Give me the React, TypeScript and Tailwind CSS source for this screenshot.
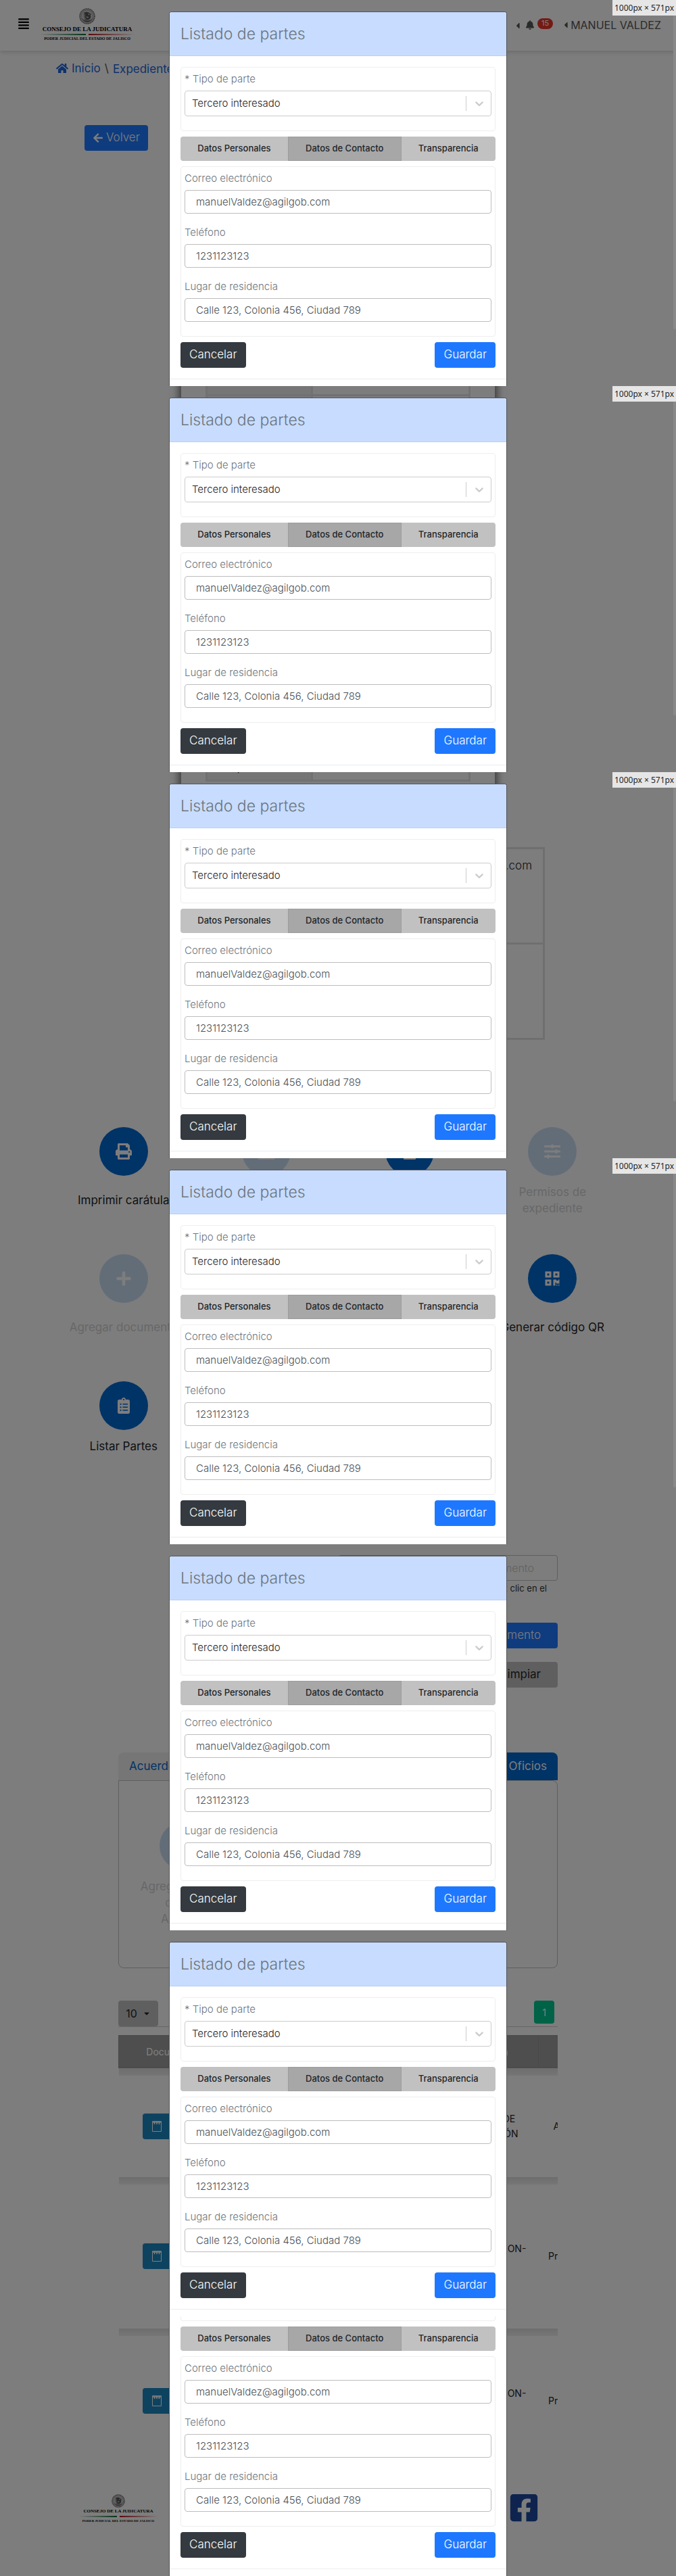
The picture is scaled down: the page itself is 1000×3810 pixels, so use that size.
import { useId } from "react";
import type { ReactNode } from "react";
import type { IconType } from "react-icons";
import {
  FaAlignJustify,
  FaArrowLeft,
  FaBell,
  FaCaretDown,
  FaCaretLeft,
  FaClipboardList,
  FaDownload,
  FaFacebookSquare,
  FaFile,
  FaHome,
  FaPlus,
  FaPrint,
  FaQrcode,
  FaSlidersH,
} from "react-icons/fa";

/* ---------- Modal ---------- */

function Field({ label, value, type = "text" }: { label: string; value: string; type?: string }) {
  const id = useId();
  return (
    <div className="mb-[19px]">
      <label htmlFor={id} className="mb-2 block text-[15px] leading-[18px] font-light text-[#6c757d]">
        {label}
      </label>
      <input
        id={id}
        type={type}
        defaultValue={value}
        className="block h-[35px] w-full rounded border border-[#bdbdbd] bg-white px-4 text-[15px] font-light text-[#495057] outline-none"
      />
    </div>
  );
}

function TypeSelect() {
  const id = useId();
  return (
    <>
      <label htmlFor={id} className="mb-2 block text-[15px] leading-[18px] font-light text-[#6c757d]">
        * Tipo de parte
      </label>
      <div className="relative">
        <select
          id={id}
          defaultValue="tercero"
          className="block h-[38px] w-full appearance-none rounded border border-[#cccccc] bg-white px-[10px] text-[15px] font-light text-[#212529] outline-none"
        >
          <option value="tercero">Tercero interesado</option>
          <option value="actor">Actor</option>
          <option value="demandado">Demandado</option>
        </select>
        <span className="pointer-events-none absolute inset-y-2 right-0 flex w-[38px] items-center justify-center border-l border-[#cccccc]">
          <svg viewBox="0 0 20 20" className="size-5 fill-[#cccccc]" aria-hidden="true">
            <path d="M4.516 7.548c0.436-0.446 1.043-0.481 1.576 0l3.908 3.747 3.908-3.747c0.533-0.481 1.141-0.446 1.574 0 0.436 0.445 0.408 1.197 0 1.615-0.406 0.418-4.695 4.502-4.695 4.502-0.217 0.223-0.502 0.335-0.787 0.335s-0.57-0.112-0.789-0.335c0 0-4.287-4.084-4.695-4.502s-0.436-1.17 0-1.615z" />
          </svg>
        </span>
      </div>
    </>
  );
}

function Tab({ children, active = false }: { children: ReactNode; active?: boolean }) {
  return (
    <button
      type="button"
      className={
        active
          ? "flex-auto border border-[#9c9c9c] bg-[#a7a7a7] px-2 text-[13px] font-medium text-[#212529]"
          : "flex-auto bg-[#c1c1c1] px-2 text-[13px] font-medium text-[#212529]"
      }
    >
      {children}
    </button>
  );
}

function ContactForm() {
  return (
    <>
      <div className="mt-2 flex h-9 overflow-hidden rounded">
        <Tab>Datos Personales</Tab>
        <Tab active>Datos de Contacto</Tab>
        <Tab>Transparencia</Tab>
      </div>
      <div className="mt-2 rounded border border-[#eeeeee] px-[5px] pt-2 pb-[2px]">
        <Field label="Correo electrónico" value="manuelValdez@agilgob.com" type="email" />
        <Field label="Teléfono" value="1231123123" type="tel" />
        <Field label="Lugar de residencia" value="Calle 123, Colonia 456, Ciudad 789" />
      </div>
      <div className="mt-2 flex justify-between">
        <button type="button" className="h-[38px] rounded bg-[#343a40] px-[13px] text-[17px] font-light text-white">
          Cancelar
        </button>
        <button type="button" className="h-[38px] rounded bg-[#1e78ff] px-[13px] text-[17px] font-light text-white">
          Guardar
        </button>
      </div>
    </>
  );
}

function ModalPage({ sized }: { sized: boolean }) {
  return (
    <section className="relative flex justify-center pt-[17px]">
      <div className="w-full max-w-[500px] overflow-hidden rounded-t border-x border-t border-[#555555] bg-white">
        <header className="flex h-[65px] items-center border-b border-[#b8cff5] bg-[#c7dcff] px-4">
          <h2 className="text-[23px] font-light text-[#6c757d]">Listado de partes</h2>
        </header>
        <div className="px-4 pt-4 pb-4">
          <div className="rounded border border-[#eeeeee] px-[5px] pt-2 pb-[21px]">
            <TypeSelect />
          </div>
          <ContactForm />
        </div>
        <div className="h-[11px] border-t border-[#e9ecef]" />
      </div>
      {sized && (
        <>
          <div className="absolute top-0 right-0 h-[487px] w-1 rounded-b bg-[#898989]" />
          <div className="absolute top-0 right-0 flex h-[23px] w-[94px] items-center justify-center bg-[#e6e6e6] font-['Noto_Sans'] text-[12px] whitespace-nowrap text-[#222222]">
            1000px × 571px
          </div>
        </>
      )}
    </section>
  );
}

function ModalTail() {
  return (
    <section className="flex justify-center">
      <div className="w-full max-w-[500px] border-x border-[#555555] bg-white">
        <div className="px-4 pb-4">
          <div className="h-[7px] rounded-b border-x border-b border-[#eeeeee]" />
          <ContactForm />
        </div>
        <div className="h-[11px] border-t border-[#e9ecef]" />
      </div>
    </section>
  );
}

/* ---------- Page behind the modal ---------- */

function Logo({ small = false }: { small?: boolean }) {
  return (
    <div
      className={
        small
          ? "flex w-[116px] flex-col items-center font-['Liberation_Serif',serif] font-bold whitespace-nowrap text-black"
          : "flex w-[140px] flex-col items-center font-['Liberation_Serif',serif] font-bold whitespace-nowrap text-black"
      }
    >
      <svg viewBox="0 0 48 48" className={small ? "size-5" : "size-6"} aria-hidden="true">
        <circle cx="24" cy="24" r="22" fill="#c4c4c4" stroke="#5c5c5c" strokeWidth="3" strokeDasharray="2 1" />
        <circle cx="24" cy="24" r="18" fill="none" stroke="#777" strokeWidth="1" />
        <path
          d="M14 14c6-4 14-3 18 2l5 2-4 2c3 5 1 11-4 14l-6 1-9-2 8-2-9-3 7-1-8-4 8 0-8-5 7 1-6-5z"
          fill="#555"
        />
        <path d="M8 30c4 8 10 11 16 11s12-3 16-11c-4 5-9 7-16 7s-12-2-16-7z" fill="#555" />
        <path d="M26 16l5 2-2 3zM20 25l9 1-4 3z" fill="#ddd" />
      </svg>
      <span className={small ? "text-[7px] leading-[11px]" : "mt-[2px] text-[9px] leading-[11px]"}>
        CONSEJO DE LA JUDICATURA
      </span>
      <span className="my-[1px] flex h-[2px] w-full gap-1">
        <span className="flex-1 bg-linear-to-r from-transparent to-[#0a6a34]" />
        <span className="flex-1 bg-linear-to-r from-[#b5121b] to-transparent" />
      </span>
      <span className={small ? "text-[5px] leading-[9px]" : "text-[6px] leading-[9px]"}>
        PODER JUDICIAL DEL ESTADO DE JALISCO
      </span>
    </div>
  );
}

function Action({ icon: Icon, children, disabled = false }: { icon: IconType; children: ReactNode; disabled?: boolean }) {
  return (
    <button type="button" disabled={disabled} className={disabled ? "flex flex-col items-center opacity-20" : "flex flex-col items-center"}>
      <span className="flex size-[72px] items-center justify-center rounded-full bg-[#0066cc] text-[#fafafa]">
        <Icon size={24} />
      </span>
      <span className="mt-3 flex grow items-center text-[17px] leading-6 text-[#212529]">{children}</span>
    </button>
  );
}

function DocButton() {
  return (
    <button type="button" aria-label="Ver documento" className="ml-[35px] flex h-[38px] w-[88px] items-center rounded bg-[#1c86c0] pl-[14px]">
      <svg viewBox="0 0 14 16" className="h-4 w-[14px]" fill="none" stroke="#fafafa" aria-hidden="true">
        <path d="M.5 .5h13v15h-13z" />
        <path d="M.5 2h13M3.500 1v4M7 1v4M10.500 1v4" strokeWidth="1.500" />
      </svg>
    </button>
  );
}

const documents = [
  { lines: ["AUTO DE", "ADMISIÓN"], kind: "Acuerdo", height: "h-[150px]" },
  { lines: ["PROMOCION-", "2020"], kind: "Promoción", height: "h-[213px]" },
  { lines: ["PROMOCION-", "2020"], kind: "Promoción", height: "h-[192px]" },
];

function Backdrop() {
  return (
    <div className="min-w-0 overflow-hidden bg-[#fafafa]">
      <header className="flex h-[75px] items-start justify-between bg-[#fcfcfc] shadow-[0_2px_6px_rgba(0,0,0,0.15)]">
        <div className="flex items-start pl-[26px]">
          <button type="button" aria-label="Menú" className="mt-[26px] text-black">
            <FaAlignJustify size={18} />
          </button>
          <a href="#inicio" className="mt-3 ml-[15px]">
            <Logo />
          </a>
        </div>
        <div className="mt-[27px] flex items-start pr-[22px] text-[#555555]">
          <button type="button" aria-label="Notificaciones" className="flex items-start">
            <FaCaretLeft size={14} className="mt-1" />
            <FaBell size={14} className="mt-[3px] ml-1" />
            <span className="ml-1 h-4 rounded-full bg-[#e8352b] px-[6px] text-[11px] leading-[15px] text-white">15</span>
          </button>
          <button type="button" className="ml-3 flex items-center text-[16px] leading-5">
            <FaCaretLeft size={14} />
            MANUEL VALDEZ
          </button>
        </div>
      </header>

      <nav className="flex items-center pt-3 pl-[83px] text-[17px] leading-6 text-[#1e64d8]" aria-label="Ruta">
        <a href="#inicio" className="flex items-center gap-[5px]">
          <FaHome size={18} />
          Inicio
        </a>
        <span className="mx-[6px] text-[#555555]">\</span>
        <a href="#expedientes" className="pt-[3px]">Expedientes</a>
      </nav>

      <button type="button" className="mt-[71px] ml-[125px] flex h-[38px] items-center gap-1 rounded bg-[#1e78ff] px-3 text-[17px] font-light text-[#fafafa]">
        <FaArrowLeft size={16} />
        Volver
      </button>

      <div className="mx-auto mt-[200px] h-[800px] w-[464px] px-9 shadow-[0_0_10px_4px_rgba(0,0,0,0.5)]">
        <table className="w-full border-collapse text-[17px] text-[#212529]">
          <tbody>
            <tr className="h-[160px]">
              <th className="w-[40%] border-3 border-[#e3e3e3] bg-[#ededed]" />
              <td className="border-3 border-[#e3e3e3]" />
            </tr>
            <tr className="h-[570px]">
              <th className="border-3 border-[#e3e3e3] bg-[#ededed] pb-[6px] align-bottom font-normal">patronal</th>
              <td className="border-3 border-[#e3e3e3]" />
            </tr>
          </tbody>
        </table>
      </div>

      <table className="mt-[30px] ml-[26.8%] w-[53.8%] border-collapse text-right text-[17px] font-light text-[#212529]">
        <tbody>
          <tr className="h-[141px]">
            <td className="border-3 border-[#dedede] px-4 pt-3 align-top">manuelValdez@agilgob.com</td>
          </tr>
          <tr className="h-[141px]">
            <td className="border-3 border-[#dedede]" />
          </tr>
        </tbody>
      </table>

      <div className="mx-auto mt-[129px] grid w-[84.6%] grid-cols-4 gap-y-14">
        <Action icon={FaPrint}>Imprimir carátula</Action>
        <Action icon={FaDownload} disabled>Descargar</Action>
        <Action icon={FaFile}>Ver expediente</Action>
        <Action icon={FaSlidersH} disabled>Permisos de<br />expediente</Action>
        <Action icon={FaPlus} disabled>Agregar documento</Action>
        <Action icon={FaFile} disabled>Solicitar<br />documento</Action>
        <Action icon={FaDownload}>Descargar</Action>
        <Action icon={FaQrcode}>Generar código QR</Action>
        <Action icon={FaClipboardList}>Listar Partes</Action>
      </div>

      <div className="mx-[17.5%] mt-[149px]">
        <div className="flex flex-col items-end">
          <input
            type="text"
            aria-label="Buscar documento"
            placeholder="Nombre del documento"
            className="h-[38px] w-1/2 rounded border border-[#bdbdbd] pr-[34px] text-right text-[16px] font-light placeholder:text-[#c4c4c4]"
          />
          <small className="mt-[1px] mr-4 text-[13px] leading-5 text-[#333333]">Para buscar haz clic en el</small>
          <button type="button" className="mt-[41px] h-[38px] rounded bg-[#1e78ff] px-[25px] text-[17px] font-light text-[#fafafa]">
            Buscar documento
          </button>
          <button type="button" className="mt-5 h-[38px] rounded bg-[#bfbfbf] px-[25px] text-[17px] text-[#212529]">
            Limpiar
          </button>
        </div>

        <div className="mt-24 flex h-[41px] justify-between text-[17px]">
          <button type="button" className="rounded-t-lg bg-[#ededed] px-4 text-[#0066cc]">Acuerdos</button>
          <button type="button" className="rounded-t-lg bg-[#0066cc] px-4 text-[#fafafa]">Oficios</button>
        </div>
        <div className="h-[278px] rounded-b-lg rounded-tr-lg border border-[#bdbdbd] pt-[60px] pl-7">
          <div className="flex w-[136px] flex-col items-center text-center opacity-20">
            <span className="size-[72px] rounded-full bg-[#0066cc]" />
            <span className="mt-3 text-[17px] leading-6 text-[#212529]">
              Agregar archivo
              <br />
              de tipo
              <br />
              Acuerdo
            </span>
          </div>
        </div>

        <div className="mt-12 flex items-start justify-between border-b border-[#cccccc]">
          <button type="button" className="flex h-[38px] w-[59px] items-center justify-center gap-2 rounded bg-[#bfbfbf] text-[16px] text-[#212529]">
            10
            <FaCaretDown size={12} />
          </button>
          <button type="button" className="mr-[5px] h-[34px] w-[30px] rounded bg-[#00c48c] text-[14px] text-[#fafafa]">1</button>
        </div>

        <div className="mt-3 overflow-hidden">
          <table className="w-[721px] table-fixed border-collapse text-center text-[14px] leading-[22px] text-[#212529]">
            <colgroup>
              <col className="w-[158px]" />
              <col className="w-[333px]" />
              <col className="w-[130px]" />
              <col className="w-[100px]" />
            </colgroup>
            <thead>
              <tr className="h-12 bg-[#9c9c9c] text-white">
                <th className="border border-[#929292] font-normal">Documento</th>
                <th className="border border-[#929292] font-normal">Nombre</th>
                <th className="border border-[#929292] font-normal">Fecha</th>
                <th className="border border-[#929292] font-normal">Tipo</th>
              </tr>
            </thead>
            {documents.map((doc, index) => (
              <tbody key={index}>
                <tr className="h-[11px]">
                  <td colSpan={4} className="h-[11px] bg-linear-to-b from-[#dcdcdc] to-[#ececec] p-0" />
                </tr>
                <tr className={doc.height}>
                  <td className="p-0">
                    <DocButton />
                  </td>
                  <td />
                  <td>
                    {doc.lines[0]}
                    <br />
                    {doc.lines[1]}
                  </td>
                  <td>{doc.kind}</td>
                </tr>
              </tbody>
            ))}
          </table>
        </div>
      </div>

      <footer className="mt-[42px] flex items-start justify-between pr-[20.5%] pl-[11.7%]">
        <Logo small />
        <a href="#facebook" aria-label="Facebook" className="text-[#1d489c]">
          <FaFacebookSquare size={46} className="-mt-[3px] -mr-[3px]" />
        </a>
      </footer>
    </div>
  );
}

export default function App() {
  return (
    <div className="grid grid-cols-1 font-['Inter',sans-serif]">
      <div className="col-start-1 row-start-1 grid">
        <Backdrop />
      </div>
      <div className="relative col-start-1 row-start-1 bg-black/50" role="dialog" aria-label="Listado de partes">
        <ModalPage sized />
        <ModalPage sized />
        <ModalPage sized />
        <ModalPage sized />
        <ModalPage sized={false} />
        <ModalPage sized={false} />
        <ModalTail />
      </div>
    </div>
  );
}
